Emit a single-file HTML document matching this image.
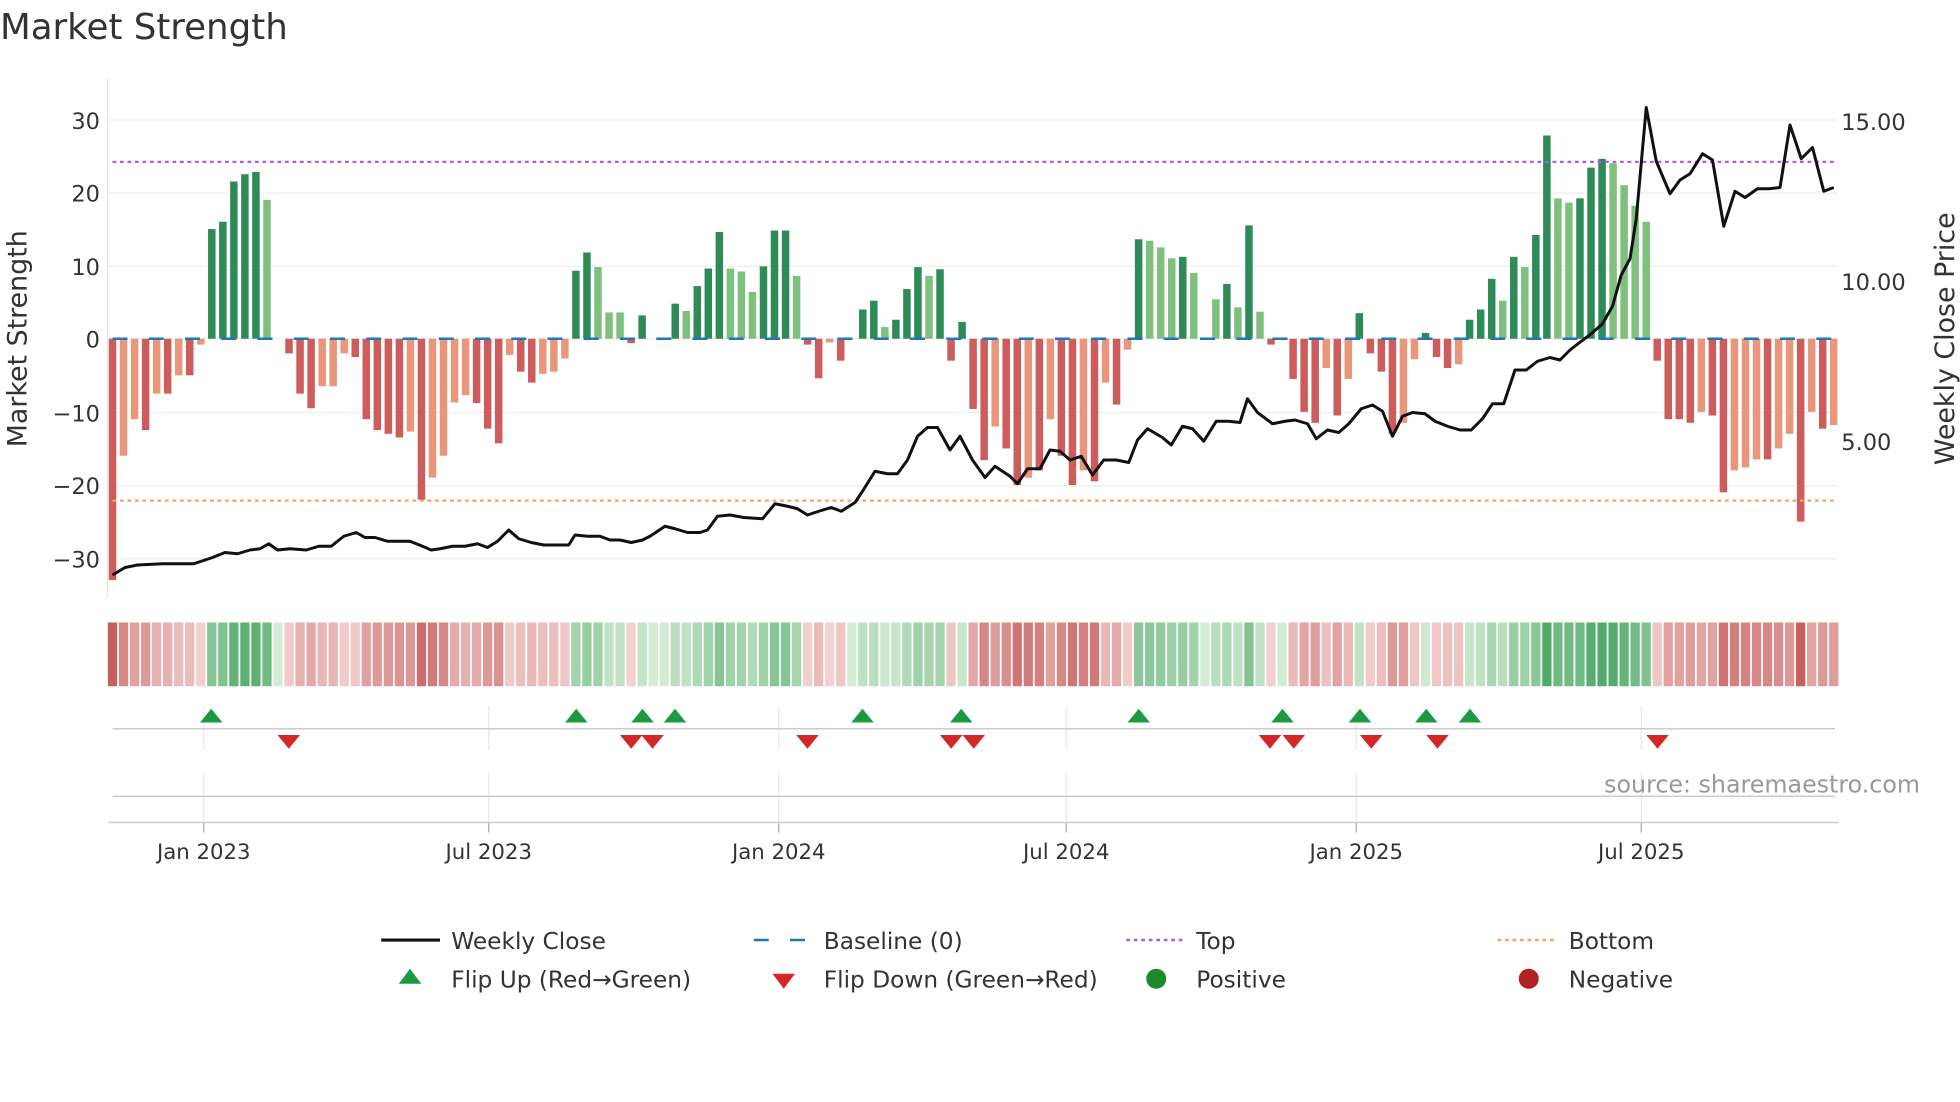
<!DOCTYPE html>
<html><head><meta charset="utf-8"><style>
html,body{margin:0;padding:0;background:#fff;width:1960px;height:1102px;overflow:hidden}
svg{display:block}
text{font-family:"DejaVu Sans","Liberation Sans",sans-serif;fill:#333}
</style></head><body>
<svg id="s" width="1960" height="1102" viewBox="0 0 1568 881.6" xmlns="http://www.w3.org/2000/svg">
<g id="grid"></g>
<g id="heat"></g>
<g id="bars"></g>
<g id="over"></g>
<text x="0" y="31" font-size="28.5">Market Strength</text>
<text transform="translate(21,271) rotate(-90)" text-anchor="middle" font-size="21.5">Market Strength</text>
<text transform="translate(1563,271) rotate(-90)" text-anchor="middle" font-size="21.5">Weekly Close Price</text>
<g font-size="18" text-anchor="end">
<text x="80" y="103">30</text><text x="80" y="161">20</text><text x="80" y="220">10</text><text x="80" y="278">0</text>
<text x="80" y="337">−10</text><text x="80" y="395">−20</text><text x="80" y="454">−30</text>
</g>
<g font-size="18">
<text x="1473" y="104">15.00</text><text x="1473" y="232">10.00</text><text x="1473" y="360">5.00</text>
</g>
<g font-size="17" text-anchor="middle">
<text x="163" y="687">Jan 2023</text><text x="391" y="687">Jul 2023</text><text x="623" y="687">Jan 2024</text>
<text x="853" y="687">Jul 2024</text><text x="1085" y="687">Jan 2025</text><text x="1313" y="687">Jul 2025</text>
</g>
<text x="1536" y="634" text-anchor="end" font-size="19" style="fill:#999">source: sharemaestro.com</text>
<g font-size="18.6">
<line x1="305" y1="752" x2="352" y2="752" stroke="#111" stroke-width="2.5"/>
<text x="361" y="759">Weekly Close</text>
<line x1="603" y1="752" x2="650" y2="752" stroke="#1f77b4" stroke-width="2" stroke-dasharray="12 17"/>
<text x="659" y="759">Baseline (0)</text>
<line x1="901" y1="752" x2="946" y2="752" stroke="#a460e8" stroke-width="2" stroke-dasharray="3 3"/>
<text x="957" y="759">Top</text>
<line x1="1198" y1="752" x2="1244" y2="752" stroke="#f4a460" stroke-width="2" stroke-dasharray="3 3"/>
<text x="1255" y="759">Bottom</text>
<polygon points="319,787 337,787 328,775" fill="#1a9a41"/>
<text x="361" y="790">Flip Up (Red→Green)</text>
<polygon points="618,779 636,779 627,791" fill="#d62728"/>
<text x="659" y="790">Flip Down (Green→Red)</text>
<circle cx="925" cy="783" r="8" fill="#1f8a2a"/>
<text x="957" y="790">Positive</text>
<circle cx="1223" cy="783" r="8" fill="#b22222"/>
<text x="1255" y="790">Negative</text>
</g>
</svg>
<script>
var NS="http://www.w3.org/2000/svg";
function el(p,t,a){var e=document.createElementNS(NS,t);for(var k in a)e.setAttribute(k,a[k]);document.getElementById(p).appendChild(e);return e;}
[96,154.5,213,271,330,388.5,447].forEach(function(y){el("grid","line",{x1:87,x2:1470,y1:y,y2:y,stroke:"#eee","stroke-width":1});});
el("grid","line",{x1:86,x2:86,y1:63,y2:478,stroke:"#e6e6e6","stroke-width":1});
[163,391,623,853,1085,1313].forEach(function(x){el("grid","line",{x1:x,x2:x,y1:565,y2:600,stroke:"#e8e8ee"});el("grid","line",{x1:x,x2:x,y1:618,y2:658,stroke:"#e8e8ee"});el("grid","line",{x1:x,x2:x,y1:658,y2:666,stroke:"#aaa"});});
el("grid","line",{x1:90,x2:1468,y1:583,y2:583,stroke:"#ccc","stroke-width":1.2});
el("grid","line",{x1:90,x2:1468,y1:637,y2:637,stroke:"#ccc","stroke-width":1.2});
el("grid","line",{x1:87,x2:1471,y1:658,y2:658,stroke:"#ccc","stroke-width":1.2});
var B=[[-33,1],[-16,0],[-11,0],[-12.5,1],[-7.5,0],[-7.5,1],[-5,0],[-5,1],[-0.8,0],[15,1],[16,1],[21.5,1],[22.5,1],[22.8,1],[19,0],[0,0],[-2,1],[-7.5,1],[-9.5,1],[-6.5,0],[-6.5,0],[-2,0],[-2.5,1],[-11,1],[-12.5,1],[-13,1],[-13.5,1],[-12.7,0],[-22,1],[-19,0],[-16,0],[-8.7,0],[-7.7,0],[-8.8,1],[-12.3,1],[-14.3,1],[-2.2,0],[-4.5,1],[-6,1],[-4.8,0],[-4.5,0],[-2.7,0],[9.3,1],[11.8,1],[9.8,0],[3.6,0],[3.6,0],[-0.6,1],[3.2,1],[0,0],[0,0],[4.8,1],[3.8,0],[7.2,1],[9.6,1],[14.6,1],[9.6,0],[9.2,0],[6.4,0],[9.9,1],[14.8,1],[14.8,1],[8.6,0],[-0.8,1],[-5.4,1],[-0.5,0],[-3,1],[0,0],[4,1],[5.2,1],[1.6,0],[2.6,1],[6.8,1],[9.8,1],[8.6,0],[9.5,1],[-3,1],[2.3,1],[-9.6,1],[-16.6,1],[-12,0],[-15,1],[-20,1],[-19,0],[-18,1],[-11,0],[-16,1],[-20,1],[-18,0],[-19.5,1],[-6,0],[-9,1],[-1.5,0],[13.6,1],[13.4,0],[12.5,0],[11,0],[11.2,1],[9,0],[0,0],[5.4,0],[7.5,1],[4.3,0],[15.5,1],[3.7,0],[-0.8,1],[0,0],[-5.5,1],[-10,1],[-11.5,1],[-4,0],[-10.5,1],[-5.5,0],[3.5,1],[-2,1],[-4.5,1],[-13,1],[-11.5,0],[-2.8,0],[0.8,1],[-2.5,1],[-4,1],[-3.5,0],[2.6,1],[4,1],[8.2,1],[5.2,0],[11.2,1],[9.8,0],[14.2,1],[27.8,1],[19.2,0],[18.6,0],[19.2,1],[23.4,1],[24.6,1],[24,0],[21,0],[18.2,0],[16,0],[-3,1],[-11,1],[-11,1],[-11.5,1],[-10,0],[-10.5,1],[-21,1],[-18,0],[-17.6,0],[-16.5,0],[-16.5,1],[-15,0],[-13,0],[-25,1],[-10,0],[-12.3,1],[-11.8,0]];
var x0=90,dx=(1467-90)/156,z=271,k=5.85,w=6;
function mix(a,b,t){return "rgb("+[0,1,2].map(function(i){return Math.round(a[i]+(b[i]-a[i])*t)}).join(",")+")";}
B.forEach(function(b,i){
 var v=b[0],x=x0+i*dx;
 if(v!==0){var c=v>0?(b[1]?"#2e8b57":"#80c07e"):(b[1]?"#cd5c5c":"#e9967a");
 var h=Math.abs(v)*k;el("bars","rect",{x:x-w/2,y:v>0?z-h:z,width:w,height:h,fill:c});}
 var t=Math.min(1,Math.abs(v)/25);
 var col=v>=0?mix([212,236,212],[80,170,105],t):mix([243,212,210],[200,95,95],t);
 el("heat","rect",{x:x-dx/2+0.7,y:498,width:dx-1.4,height:51,fill:col});
});
el("over","line",{x1:90,x2:1468,y1:271,y2:271,stroke:"#1f77b4","stroke-width":2,"stroke-dasharray":"12 17"});
el("over","line",{x1:90,x2:1468,y1:129.5,y2:129.5,stroke:"#a460e8","stroke-width":1.8,"stroke-dasharray":"3 3"});
el("over","line",{x1:90,x2:1468,y1:400.5,y2:400.5,stroke:"#f4a460","stroke-width":1.8,"stroke-dasharray":"3 3"});
var P=[[90,460],[100,454],[110,452],[130,451],[155,451],[170,446],[180,442],[190,443],[200,440],[208,439],[215,435],[222,440],[232,439],[245,440],[255,437],[265,437],[275,429],[285,426],[292,430],[300,430],[310,433],[328,433],[338,437],[345,440],[352,439],[362,437],[372,437],[382,435],[390,438],[398,433],[407,424],[415,431],[425,434],[435,436],[445,436],[455,436],[460,428],[470,429],[480,429],[488,432],[496,432],[505,434],[514,432],[520,429],[532,421],[540,423],[550,426],[560,426],[566,424],[574,413],[584,412],[595,414],[610,415],[620,403],[630,405],[638,407],[646,412],[655,409],[665,406],[673,409],[684,402],[690,393],[700,377],[710,379],[718,379],[726,368],[734,349],[742,342],[750,342],[760,360],[768,349],[778,368],[788,382],[796,373],[808,381],[814,387],[822,375],[832,375],[840,360],[848,361],[856,368],[865,365],[874,380],[883,368],[893,368],[903,370],[910,352],[918,343],[930,350],[937,356],[946,341],[954,343],[963,353],[973,337],[983,337],[992,338],[998,319],[1006,330],[1018,339],[1028,337],[1036,336],[1046,339],[1053,351],[1062,344],[1071,346],[1079,339],[1089,327],[1098,324],[1106,329],[1114,349],[1122,333],[1130,330],[1140,331],[1148,337],[1158,341],[1168,344],[1177,344],[1186,335],[1194,323],[1203,323],[1212,296],[1221,296],[1230,289],[1240,286],[1248,288],[1256,280],[1265,273],[1273,267],[1282,259],[1290,245],[1297,220],[1304,207],[1309,175],[1317,86],[1325,129],[1336,155],[1344,144],[1352,139],[1362,123],[1370,128],[1379,181],[1388,153],[1396,158],[1406,151],[1415,151],[1424,150],[1432,100],[1441,127],[1450,118],[1459,153],[1467,150]];
el("over","polyline",{points:P.map(function(p){return p.join(",")}).join(" "),fill:"none",stroke:"#111","stroke-width":2.4,"stroke-linejoin":"round"});
[169,461,514,540,690,769,911,1026,1088,1141,1176].forEach(function(x){el("over","polygon",{points:(x-9)+",578 "+(x+9)+",578 "+x+",567",fill:"#1a9a41"});});
[231,505,522,646,761,779,1016,1035,1097,1150,1326].forEach(function(x){el("over","polygon",{points:(x-9)+",588 "+(x+9)+",588 "+x+",599",fill:"#d62728"});});
</script>
</body></html>
